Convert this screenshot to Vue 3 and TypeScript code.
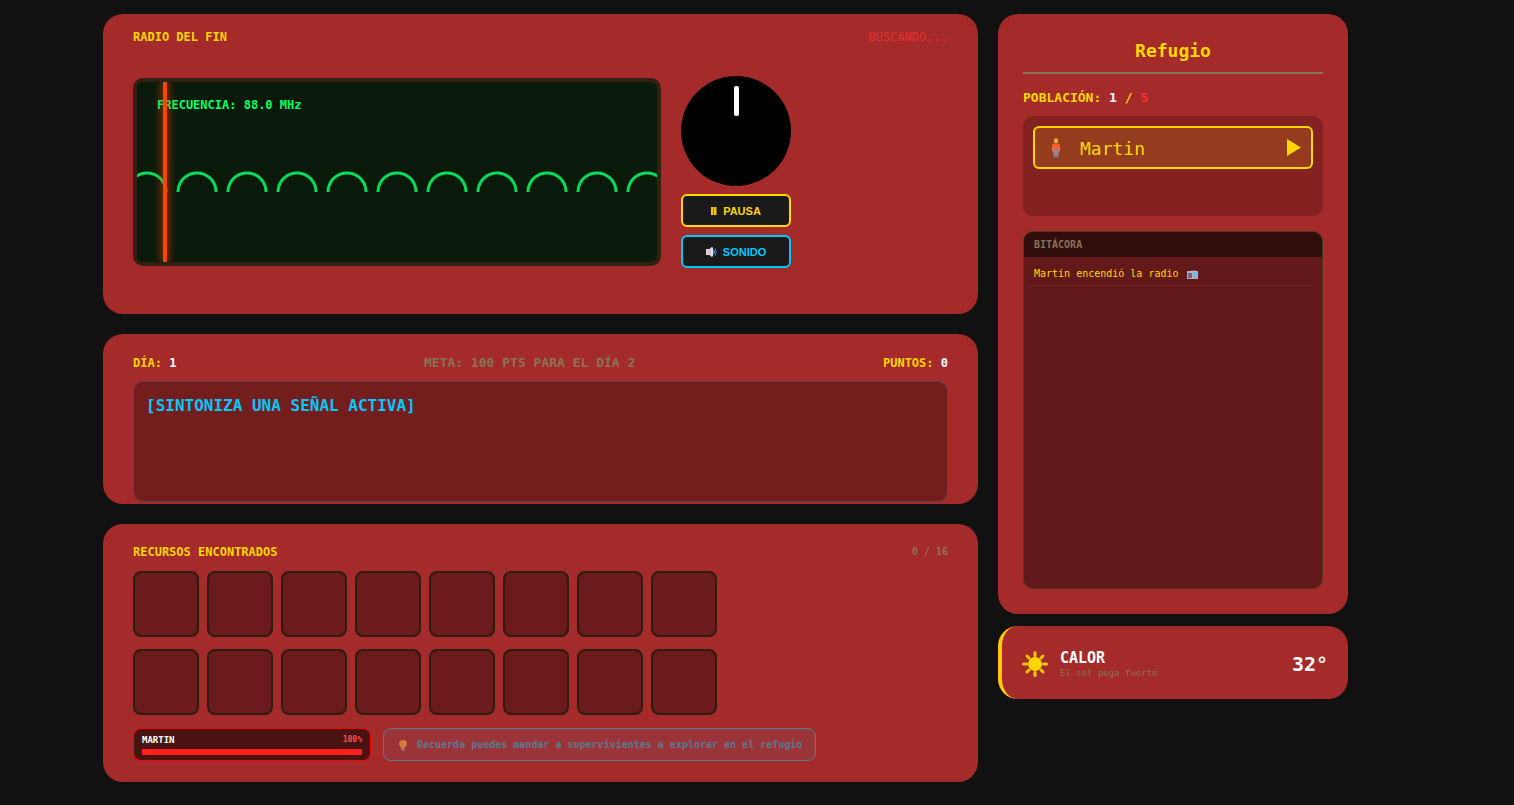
<script setup lang="ts">
import { computed, ref } from 'vue'

interface Survivor {
  name: string
  health: number
}

const frequency = ref(88)
const day = ref(1)
const points = ref(0)
const goal = ref(100)
const capacity = 16
const maxPopulation = 5
const resources = ref<string[]>([])
const survivors = ref<Survivor[]>([{ name: 'Martin', health: 100 }])
const log = ref<string[]>(['Martin encendió la radio'])

const needle = computed(() => `${5 + (frequency.value - 88) * 4.5}%`)
</script>

<template>
  <div class="page">
    <main class="main">
      <section class="panel radio">
        <header class="bar">
          <h2 class="label">RADIO DEL FIN</h2>
          <span class="status">BUSCANDO...</span>
        </header>
        <div class="tuner">
          <div class="screen">
            <div class="wave"></div>
            <p class="freq">FRECUENCIA: {{ frequency.toFixed(1) }} MHz</p>
            <div class="needle" :style="{ left: needle }"></div>
          </div>
          <div class="controls">
            <button class="knob" type="button" aria-label="Sintonizar"><span class="mark"></span></button>
            <button class="btn pause" type="button">
              <svg width="6" height="8" viewBox="0 0 6 8" aria-hidden="true">
                <rect width="6" height="8" fill="#8a6d08" />
                <rect width="2" height="8" fill="#ffc800" />
                <rect x="3" width="2" height="8" fill="#ffc800" />
              </svg>
              <span>PAUSA</span>
            </button>
            <button class="btn sound" type="button">
              <svg width="11" height="10" viewBox="0 0 11 10" aria-hidden="true">
                <path d="M0 2h3v6H0z" fill="#d9d0dc" />
                <path d="M3 2 6 0v10L3 8z" fill="#c4bac9" />
                <ellipse cx="6" cy="5" rx="1.300" ry="5" fill="#e8e0ea" />
                <path d="M8 3q1.300 2 0 4" fill="none" stroke="#4a9be8" />
                <path d="M9 1q2.600 4 0 8" fill="none" stroke="#2f76c4" />
              </svg>
              <span>SONIDO</span>
            </button>
          </div>
        </div>
      </section>

      <section class="panel message">
        <header class="bar">
          <span class="label">DÍA: <b>{{ day }}</b></span>
          <span class="goal">META: {{ goal }} PTS PARA EL DÍA {{ day + 1 }}</span>
          <span class="label">PUNTOS: <b>{{ points }}</b></span>
        </header>
        <div class="readout">[SINTONIZA UNA SEÑAL ACTIVA]</div>
      </section>

      <section class="panel resources">
        <header class="bar">
          <h2 class="label">RECURSOS ENCONTRADOS</h2>
          <span class="count">{{ resources.length }} / {{ capacity }}</span>
        </header>
        <ul class="slots">
          <li v-for="n in capacity" :key="n" class="slot">{{ resources[n - 1] }}</li>
        </ul>
        <footer class="foot">
          <div v-for="s in survivors" :key="s.name" class="health">
            <div class="health-top">
              <span>{{ s.name.toUpperCase() }}</span>
              <span class="pct">{{ s.health }}%</span>
            </div>
            <div class="track"><div class="fill" :style="{ width: s.health + '%' }"></div></div>
          </div>
          <p class="hint">
            <svg width="8" height="11" viewBox="0 0 8 11" aria-hidden="true">
              <path d="M4 0C1.600 0 0 1.600 0 3.700 0 5.500 1.800 6.300 2.100 8h3.800C6.200 6.300 8 5.500 8 3.700 8 1.600 6.400 0 4 0z" fill="#d07a3c" />
              <path d="M5 1.200c1 .4 1.600 1.200 1.600 2.400" stroke="#e0a070" fill="none" />
              <path d="M2.300 8h3.400v2L4.800 11H3.200l-.9-1z" fill="#ab6878" />
            </svg>
            <span>Recuerda puedes mandar a supervivientes a explorar en el refugio</span>
          </p>
        </footer>
      </section>
    </main>

    <aside class="side">
      <section class="panel shelter">
        <h1 class="title">Refugio</h1>
        <p class="population">
          POBLACIÓN: <b>{{ survivors.length }}</b> / <span class="max">{{ maxPopulation }}</span>
        </p>
        <div class="people">
          <button v-for="s in survivors" :key="s.name" class="person" type="button">
            <svg width="8" height="20" viewBox="0 0 8 20" aria-hidden="true">
              <path d="M0 8h2v6H1L0 12zM6 8h2v4l-1 2H6z" fill="#d98a3d" />
              <path d="M1 5.500h6L8 9v1H0V9z" fill="#f8602c" />
              <path d="M1.500 9h5v3h-5z" fill="#f8602c" />
              <path d="M1.300 11.500h5.400L6.300 19H4.300L4 14l-.3 5h-2z" fill="#9a80a0" />
              <path d="M1.300 18.500h2.400V20H1.300zM4.300 18.500h2.400V20H4.300z" fill="#6d567a" />
              <rect x="2" width="4" height="5" rx="1.500" fill="#f2b04c" />
              <path d="M2 2.500V1.500Q2 0 4 0t2 1.500v1L5 1.800H3z" fill="#d88a26" />
            </svg>
            <span class="name">{{ s.name }}</span>
            <svg width="14" height="17" viewBox="0 0 14 17" aria-hidden="true">
              <path d="M0 0 14 8.500 0 17z" fill="#ffd700" />
            </svg>
          </button>
        </div>
        <div class="log">
          <h2 class="log-head">BITÁCORA</h2>
          <ul class="entries">
            <li v-for="entry in log" :key="entry" class="entry">
              <span>{{ entry }}</span>
              <svg width="11" height="9" viewBox="0 0 11 9" aria-hidden="true">
                <path d="M4 .5h5" stroke="#8c5060" />
                <rect y="1" width="11" height="8" fill="#b9acc4" />
                <rect x="1" y="3" width="4" height="5" fill="#6d6480" />
                <rect x="6" y="2" width="4" height="4" fill="#58c4f0" />
                <path d="M6 7.500h4" stroke="#a394af" />
              </svg>
            </li>
          </ul>
        </div>
      </section>

      <section class="panel weather">
        <svg width="26" height="26" viewBox="0 0 26 26" aria-hidden="true">
          <circle cx="13" cy="13" r="7" fill="#ffd700" />
          <path
            d="M13 1.500v3M13 21.500v3M1.500 13h3M21.500 13h3M5 5l2 2M19 19l2 2M5 21l2-2M19 7l2-2"
            stroke="#ffc800"
            stroke-width="3"
            stroke-linecap="round"
          />
        </svg>
        <div class="weather-text">
          <strong>CALOR</strong>
          <span>El sol pega fuerte</span>
        </div>
        <span class="temp">32°</span>
      </section>
    </aside>
  </div>
</template>

<style>
body {
  margin: 0;
  background: #111;
}
</style>

<style scoped>
* {
  box-sizing: border-box;
}
.page {
  display: flex;
  align-items: flex-start;
  gap: 20px;
  padding: 14px 166px 23px 103px;
  font-family: 'DejaVu Sans Mono', monospace;
  font-size: 12px;
  line-height: 16px;
  color: #ffd700;
}
h1,
h2,
p,
ul {
  margin: 0;
  padding: 0;
  list-style: none;
}
button {
  font: inherit;
  color: inherit;
  cursor: pointer;
}
svg {
  flex: none;
  display: block;
}
.main {
  flex: 1;
  min-width: 0;
  display: flex;
  flex-direction: column;
  gap: 20px;
}
.side {
  width: 350px;
  flex: none;
  display: flex;
  flex-direction: column;
  gap: 12px;
}
.panel {
  background: #a52a2a;
  border-radius: 20px;
}
.bar {
  display: flex;
  justify-content: space-between;
  align-items: center;
}
.label {
  font-size: 12px;
  font-weight: bold;
}
b {
  color: #fff;
}
.radio {
  padding: 15px 30px 46px;
}
.status {
  color: #e03030;
}
.tuner {
  display: flex;
  align-items: center;
  gap: 20px;
  margin-top: 31px;
}
.screen {
  position: relative;
  width: 528px;
  height: 188px;
  border: 4px solid #332013;
  border-radius: 10px;
  background: #0a1a0a;
  overflow: hidden;
}
.freq {
  position: absolute;
  top: 15px;
  left: 20px;
  font-weight: bold;
  color: #00ff66;
}
.wave {
  position: absolute;
  top: 70px;
  left: 0;
  right: 0;
  height: 40px;
  opacity: 0.85;
  background: radial-gradient(circle at 50% 100%, transparent 17px, #00ff66 18px, #00ff66 20px, transparent 21px) -15px 0 / 50px 40px repeat-x;
}
.needle {
  position: absolute;
  top: 0;
  bottom: 0;
  width: 4px;
  background: #ff4500;
  box-shadow: 0 0 10px #ff4500;
}
.controls {
  width: 110px;
  display: flex;
  flex-direction: column;
  gap: 8px;
}
.knob {
  display: flex;
  justify-content: center;
  align-items: flex-start;
  height: 110px;
  padding: 10px 0 0;
  border: 0;
  border-radius: 50%;
  background: #000;
}
.mark {
  width: 5px;
  height: 30px;
  border-radius: 2px;
  background: #fff;
}
.btn {
  display: flex;
  justify-content: center;
  align-items: center;
  gap: 6px;
  height: 33px;
  padding: 0;
  border: 2px solid;
  border-radius: 6px;
  background: #1a1a1a;
  font-family: 'Liberation Sans', Arial, sans-serif;
  font-size: 11px;
  font-weight: bold;
}
.pause {
  color: #ffd700;
}
.sound {
  color: #00c8ff;
}
.message {
  padding: 21px 30px 2px;
}
.goal {
  font-size: 13px;
  font-weight: bold;
  color: #8b7355;
}
.readout {
  margin-top: 10px;
  height: 121px;
  padding: 14px 12px;
  border: 1px solid #5f424b;
  border-radius: 10px;
  background: #731d1d;
  font-size: 16px;
  line-height: 20px;
  font-weight: bold;
  color: #00c8ff;
}
.resources {
  padding: 20px 30px 21px;
}
.count {
  font-size: 10px;
  font-weight: bold;
  color: #8b7355;
}
.slots {
  display: grid;
  grid-template-columns: repeat(8, 66px);
  gap: 12px 8px;
  margin-top: 11px;
}
.slot {
  height: 66px;
  border: 2px solid #2d1c10;
  border-radius: 8px;
  background: #6b1b1b;
}
.foot {
  display: flex;
  gap: 12px;
  margin-top: 13px;
}
.health {
  width: 238px;
  height: 33px;
  padding: 5px 8px;
  border: 1px solid #ff0000;
  border-radius: 8px;
  background: #4a1313;
}
.health-top {
  display: flex;
  justify-content: space-between;
  font-size: 9px;
  line-height: 12px;
  font-weight: bold;
  color: #fff;
}
.pct {
  font-size: 8px;
  color: #ff4d4d;
}
.track {
  height: 6px;
  margin-top: 3px;
  background: #000;
}
.fill {
  height: 100%;
  background: #ff2020;
}
.hint {
  display: flex;
  align-items: center;
  gap: 10px;
  height: 33px;
  padding: 1px 13px 0 15px;
  border: 1px solid #5f7890;
  border-radius: 8px;
  background: #9a3438;
  font-size: 10px;
  font-weight: bold;
  color: #5f7890;
}
.shelter {
  padding: 25px;
}
.title {
  padding-bottom: 10px;
  border-bottom: 2px solid #8b7355;
  font-size: 18px;
  line-height: 23px;
  text-align: center;
}
.population {
  margin-top: 16px;
  font-size: 13px;
  font-weight: bold;
}
.max {
  color: #ff3030;
}
.people {
  height: 100px;
  margin-top: 10px;
  padding: 10px;
  border-radius: 10px;
  background: #842222;
}
.person {
  display: flex;
  align-items: center;
  width: 100%;
  height: 43px;
  padding: 0 10px 0 17px;
  border: 2px solid #ffd700;
  border-radius: 6px;
  background: #963c1e;
  text-align: left;
}
.name {
  flex: 1;
  padding: 3px 0 0 20px;
  font-size: 18px;
}
.log {
  height: 358px;
  margin-top: 15px;
  border: 1px solid #52391f;
  border-radius: 10px;
  background: #631919;
  overflow: hidden;
}
.log-head {
  padding: 5px 10px 4px;
  background: #310c0c;
  font-size: 10px;
  color: #8b7355;
}
.entries {
  padding: 5px;
}
.entry {
  display: flex;
  align-items: center;
  gap: 8px;
  padding: 4px 5px 3px;
  border-bottom: 1px solid #6b2323;
  font-size: 10px;
}
.weather {
  display: flex;
  align-items: center;
  gap: 12px;
  height: 73px;
  padding: 2px 20px 0;
  border-left: 4px solid #ffc800;
}
.weather-text {
  flex: 1;
  display: flex;
  flex-direction: column;
}
.weather-text strong {
  font-size: 15px;
  line-height: 18px;
  color: #fff;
}
.weather-text span {
  font-size: 9px;
  line-height: 12px;
  color: #8b7355;
}
.temp {
  font-size: 20px;
  font-weight: bold;
  color: #fff;
}
</style>
